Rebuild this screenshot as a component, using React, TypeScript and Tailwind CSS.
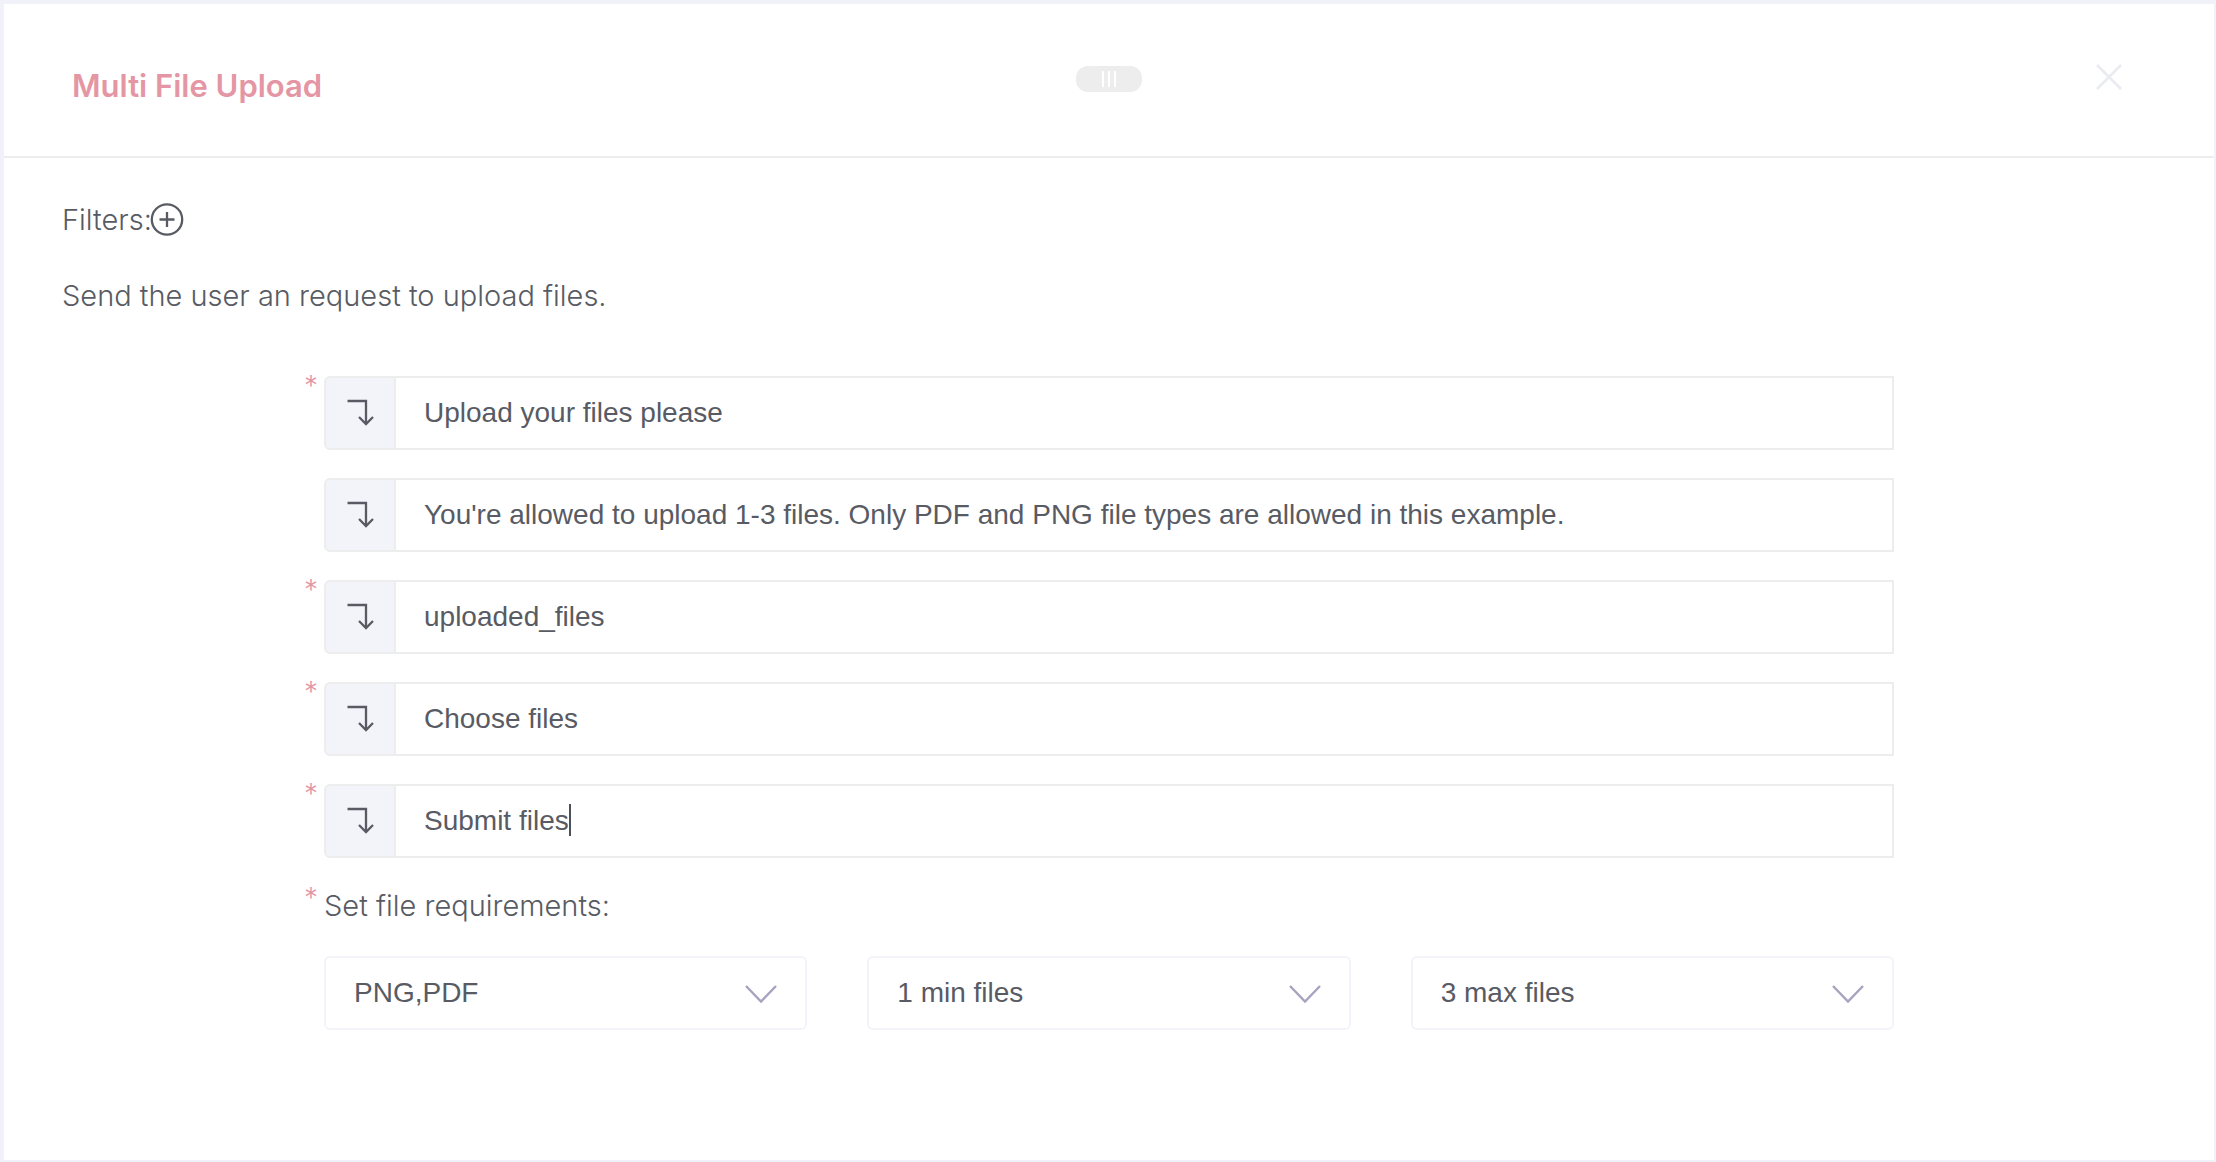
import type { ReactNode } from "react";

type Field = { id: string; label: string; value: string; required: boolean; active?: boolean };

const fields: Field[] = [
  { id: "title", label: "Title", value: "Upload your files please", required: true },
  {
    id: "description",
    label: "Description",
    value: "You're allowed to upload 1-3 files. Only PDF and PNG file types are allowed in this example.",
    required: false,
  },
  { id: "variable", label: "Variable name", value: "uploaded_files", required: true },
  { id: "choose", label: "Choose button text", value: "Choose files", required: true },
  { id: "submit", label: "Submit button text", value: "Submit files", required: true, active: true },
];

const requirements = [
  { id: "types", label: "File types", value: "PNG,PDF" },
  { id: "min", label: "Minimum files", value: "1 min files" },
  { id: "max", label: "Maximum files", value: "3 max files" },
];

function Required() {
  return (
    <span
      aria-hidden="true"
      className="absolute -top-0.5 -left-5 font-[Inter,sans-serif] text-[28px] leading-6 font-light text-[#e596a4]"
    >
      *
    </span>
  );
}

function InsertArrow() {
  return (
    <svg width="28" height="28" viewBox="0 0 28 28" fill="none" stroke="currentColor" strokeWidth="2.3" aria-hidden="true">
      <path d="M1.5 2H20V25" />
      <path d="M13 18L20 25L27 18" />
    </svg>
  );
}

function TextField({ field }: { field: Field }) {
  return (
    <div className="relative flex">
      {field.required && <Required />}
      <button
        type="button"
        aria-label={`Insert variable into ${field.label}`}
        className="flex w-18 shrink-0 items-center justify-center rounded-l-md border-2 border-[#ededee] bg-[#f3f4f9]"
      >
        <InsertArrow />
      </button>
      <div className="relative grow">
        <input
          id={field.id}
          type="text"
          aria-label={field.label}
          defaultValue={field.value}
          className="block w-full border-2 border-l-0 border-[#ededee] bg-white px-7 py-[17px] text-[28px] leading-9 outline-none"
        />
        {field.active && (
          <span className="pointer-events-none absolute top-5 left-7 flex items-center">
            <span className="invisible text-[28px] leading-8 whitespace-pre" aria-hidden="true">
              {field.value}
            </span>
            <span className="h-8 w-0.5 bg-[#4d5058]" />
          </span>
        )}
      </div>
    </div>
  );
}

function Select({ id, label, children }: { id: string; label: string; children: ReactNode }) {
  return (
    <div className="relative">
      <select
        id={id}
        aria-label={label}
        className="block w-full appearance-none rounded-md border-2 border-[#f3f3f9] bg-white py-[17px] pr-20 pl-7 text-[28px] leading-9 outline-none"
      >
        {children}
      </select>
      <svg
        className="pointer-events-none absolute top-7 right-7.5"
        width="32"
        height="20"
        viewBox="0 0 32 20"
        fill="none"
        stroke="#a7a3bf"
        strokeWidth="2.4"
        aria-hidden="true"
      >
        <path d="M1 2L16 17.5L31 2" />
      </svg>
    </div>
  );
}

export default function App() {
  return (
    <div className="flex min-h-screen flex-col border-t-4 border-r-2 border-b-2 border-l-4 border-[#f1f2f9] bg-white font-['Liberation_Sans',Arial,sans-serif] text-[#585b63]">
      <header className="grid grid-cols-[1fr_auto_1fr] items-start border-b-2 border-[#ededee] px-17 pt-15 pb-13">
        <h1 className="mt-1 font-[Inter,sans-serif] text-[31px] leading-9 font-semibold text-[#e596a4]">Multi File Upload</h1>
        <button
          type="button"
          aria-label="Drag panel"
          className="mt-0.5 flex h-[26px] w-[66px] items-center justify-center gap-1 rounded-xl bg-[#ededed]"
        >
          <span className="h-4 w-0.5 bg-white" />
          <span className="h-4 w-0.5 bg-white" />
          <span className="h-4 w-0.5 bg-white" />
        </button>
        <button type="button" aria-label="Close" className="mr-6 justify-self-end">
          <svg width="26" height="26" viewBox="0 0 26 26" fill="none" stroke="#e9ebf1" strokeWidth="2.6" aria-hidden="true">
            <path d="M1 1L25 25M25 1L1 25" />
          </svg>
        </button>
      </header>

      <main className="grow px-[58px] pt-11 pb-24">
        <div className="flex items-center font-[Inter,sans-serif] text-[29px] leading-9 font-light">
          <span>Filters:</span>
          <button type="button" aria-label="Add filter" className="-ml-0.5">
            <svg width="34" height="34" viewBox="0 0 34 34" fill="none" stroke="currentColor" strokeWidth="2.3" aria-hidden="true">
              <circle cx="17" cy="16.5" r="15.2" />
              <path d="M17 9V24M9.5 16.5H24.5" />
            </svg>
          </button>
        </div>
        <p className="mt-10 font-[Inter,sans-serif] text-[29px] leading-9 font-light">
          Send the user an request to upload files.
        </p>

        <form className="mx-[262px] mt-[62px]">
          <div className="flex flex-col gap-7">
            {fields.map((field) => (
              <TextField key={field.id} field={field} />
            ))}
          </div>

          <fieldset className="mt-[30px]">
            <legend className="relative font-[Inter,sans-serif] text-[29px] leading-9 font-light">
              <Required />
              Set file requirements:
            </legend>
            <div className="mt-8 grid grid-cols-3 gap-15">
              {requirements.map((item) => (
                <Select key={item.id} id={item.id} label={item.label}>
                  <option>{item.value}</option>
                </Select>
              ))}
            </div>
          </fieldset>
        </form>
      </main>
    </div>
  );
}
